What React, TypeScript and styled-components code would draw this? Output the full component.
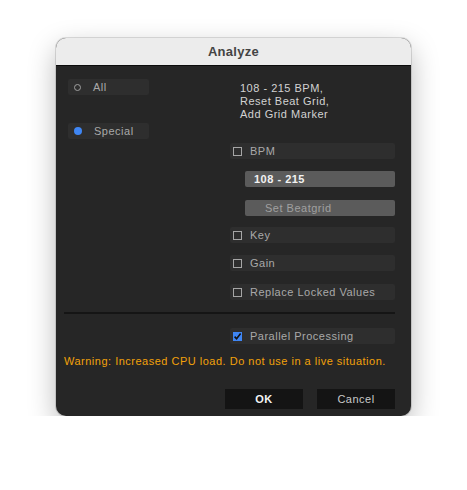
import React from "react";
import styled, { createGlobalStyle } from "styled-components";

const Global = createGlobalStyle`
  html, body {
    margin: 0;
    background: #ffffff;
    font-family: "Liberation Sans", Arial, sans-serif;
  }
`;

const Page = styled.div`
  padding: 38px 0 0 56px;
`;

const Window = styled.div`
  width: 355px;
  height: 378px;
  border-radius: 10px;
  overflow: hidden;
  display: flex;
  flex-direction: column;
  background: #262626;
  letter-spacing: 0.5px;
  box-shadow: 0 0 0 1px rgba(0, 0, 0, 0.12), 0 10px 28px rgba(0, 0, 0, 0.28);
`;

const TitleBar = styled.div`
  height: 27px;
  flex: none;
  background: #ececec;
  border-bottom: 1px solid #0c0c0c;
  display: flex;
  align-items: center;
  justify-content: center;
  font-size: 13px;
  font-weight: bold;
  letter-spacing: 0.3px;
  color: #444;
`;

const Body = styled.div`
  flex: 1;
  display: flex;
  flex-direction: column;
  padding: 13px 16px 7px 12px;
`;

const Columns = styled.div`
  display: flex;
  justify-content: space-between;
`;

const LeftCol = styled.div`
  width: 81px;
  display: flex;
  flex-direction: column;
  gap: 28px;
`;

const RightCol = styled.div`
  width: 165px;
  display: flex;
  flex-direction: column;
`;

const RadioRow = styled.div`
  height: 16px;
  background: #2e2e2e;
  border-radius: 2px;
  display: flex;
  align-items: center;
  padding-left: 6px;
  gap: 12px;
  font-size: 11px;
  color: #a9a9a9;
`;

const RadioDot = styled.span<{ $on?: boolean }>`
  width: ${(p) => (p.$on ? 8 : 7)}px;
  height: ${(p) => (p.$on ? 8 : 7)}px;
  border-radius: 50%;
  box-sizing: border-box;
  border: ${(p) => (p.$on ? "none" : "1px solid #a0a0a0")};
  background: ${(p) => (p.$on ? "#3f86f4" : "transparent")};
`;

const Description = styled.div`
  padding: 3px 0 0 10px;
  font-size: 11px;
  line-height: 13px;
  color: #d2d2d2;
  margin-bottom: 22px;
`;

const CheckRow = styled.div<{ $gap?: number }>`
  height: 16px;
  background: #2e2e2e;
  border-radius: 2px;
  display: flex;
  align-items: center;
  padding-left: 3px;
  gap: 8px;
  font-size: 11px;
  color: #a9a9a9;
  margin-top: ${(p) => p.$gap ?? 0}px;
`;

const Box = styled.span<{ $on?: boolean }>`
  width: 9px;
  height: 9px;
  box-sizing: border-box;
  border: ${(p) => (p.$on ? "none" : "1px solid #a6a6a6")};
  background: ${(p) => (p.$on ? "#3f86f4" : "transparent")};
  display: flex;
  align-items: center;
  justify-content: center;
`;

const Field = styled.div<{ $gap: number; $muted?: boolean }>`
  margin: ${(p) => p.$gap}px 0 0 15px;
  height: 16px;
  background: #5b5b5b;
  border-radius: 2px;
  display: flex;
  align-items: center;
  padding-left: ${(p) => (p.$muted ? 20 : 9)}px;
  font-size: 11px;
  font-weight: ${(p) => (p.$muted ? "normal" : "bold")};
  color: ${(p) => (p.$muted ? "#a0a0a0" : "#f2f2f2")};
`;

const Divider = styled.div`
  height: 2px;
  background: #151515;
  margin: 12px 0 0 -4px;
`;

const ParallelWrap = styled.div`
  display: flex;
  justify-content: flex-end;
`;

const ParallelRow = styled(CheckRow)`
  width: 162px;
`;

const Warning = styled.div`
  margin: 11px 0 0 -4px;
  font-size: 11px;
  color: #f2a10a;
`;

const Buttons = styled.div`
  margin-top: auto;
  display: flex;
  justify-content: flex-end;
  gap: 14px;
`;

const Button = styled.div<{ $primary?: boolean }>`
  width: 78px;
  height: 20px;
  background: #141414;
  display: flex;
  align-items: center;
  justify-content: center;
  font-size: 11px;
  font-weight: ${(p) => (p.$primary ? "bold" : "normal")};
  color: ${(p) => (p.$primary ? "#f4f4f4" : "#c9c9c9")};
`;

const Check = () => (
  <svg width="9" height="9" viewBox="0 0 9 9">
    <path d="M1.6 4.6 L3.6 6.8 L7.6 1.6" fill="none" stroke="#111" strokeWidth="1.6" />
  </svg>
);

export default function App() {
  return (
    <Page>
      <Global />
      <Window>
        <TitleBar>Analyze</TitleBar>
        <Body>
          <Columns>
            <LeftCol>
              <RadioRow>
                <RadioDot />
                All
              </RadioRow>
              <RadioRow>
                <RadioDot $on />
                Special
              </RadioRow>
            </LeftCol>
            <RightCol>
              <Description>
                108 - 215 BPM,
                <br />
                Reset Beat Grid,
                <br />
                Add Grid Marker
              </Description>
              <CheckRow>
                <Box />
                BPM
              </CheckRow>
              <Field $gap={12}>108 - 215</Field>
              <Field $gap={13} $muted>
                Set Beatgrid
              </Field>
              <CheckRow $gap={11}>
                <Box />
                Key
              </CheckRow>
              <CheckRow $gap={12}>
                <Box />
                Gain
              </CheckRow>
              <CheckRow $gap={13}>
                <Box />
                Replace Locked Values
              </CheckRow>
            </RightCol>
          </Columns>
          <Divider />
          <ParallelWrap>
            <ParallelRow $gap={14}>
              <Box $on>
                <Check />
              </Box>
              Parallel Processing
            </ParallelRow>
          </ParallelWrap>
          <Warning>Warning: Increased CPU load. Do not use in a live situation.</Warning>
          <Buttons>
            <Button $primary>OK</Button>
            <Button>Cancel</Button>
          </Buttons>
        </Body>
      </Window>
    </Page>
  );
}
